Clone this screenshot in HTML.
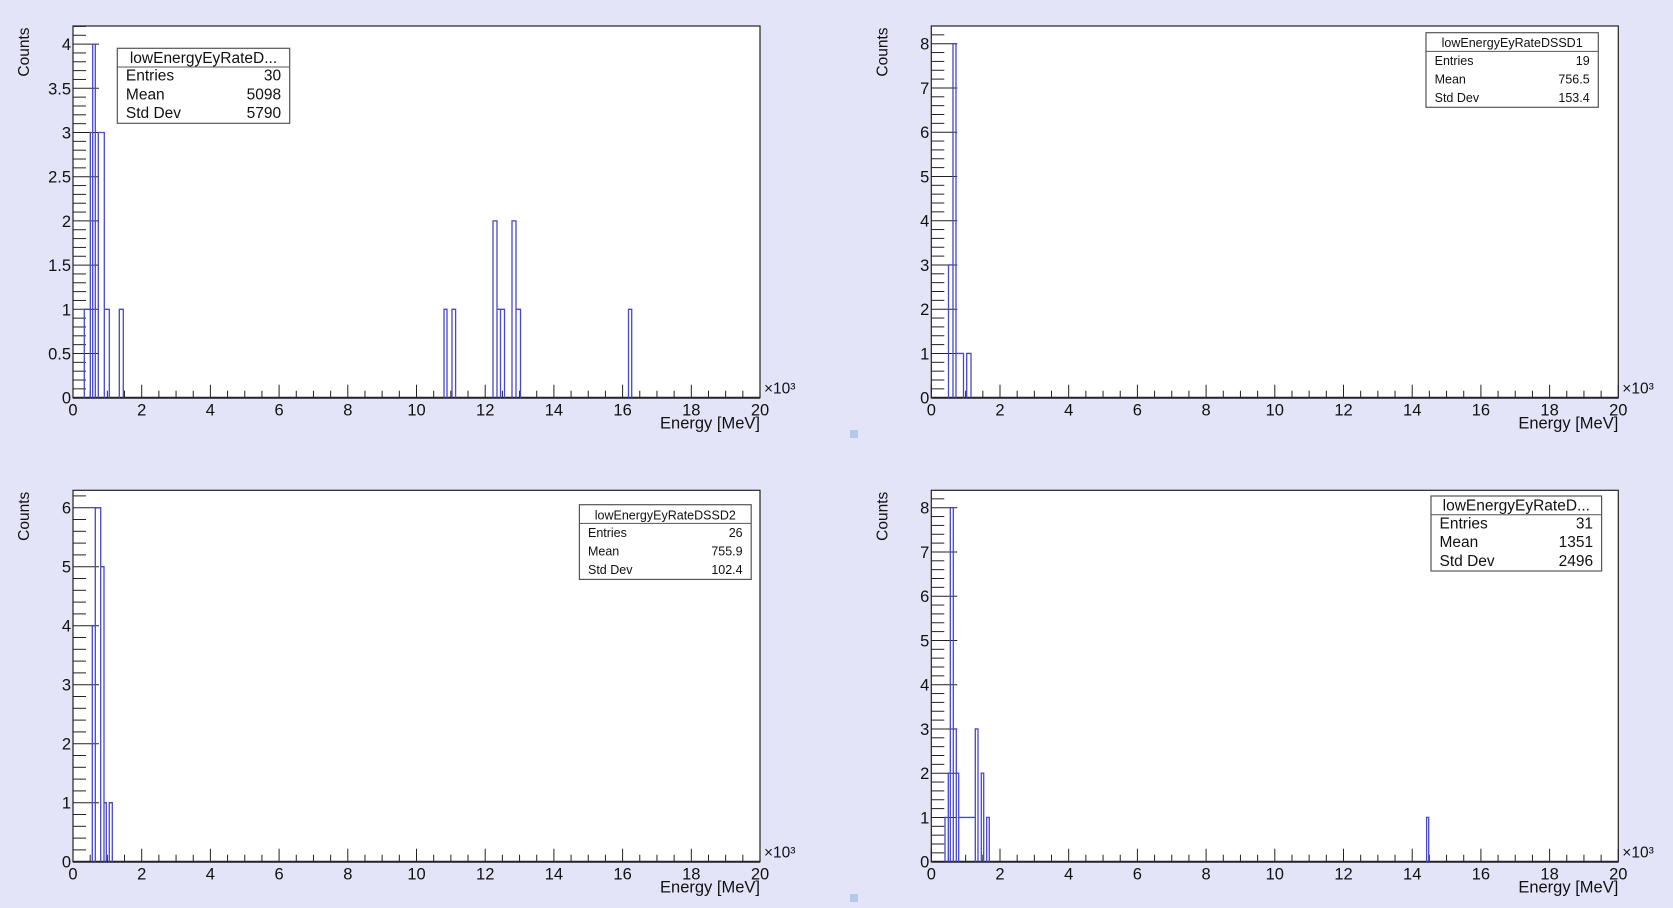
<!DOCTYPE html>
<html><head><meta charset="utf-8"><style>
html,body{margin:0;padding:0;background:#e3e4f8;}
svg{display:block;font-family:"Liberation Sans",sans-serif;}
</style></head><body>
<svg id="s" width="1673" height="908" xmlns="http://www.w3.org/2000/svg"></svg>
<script>
const s=document.getElementById('s');
let h='<rect width="1673" height="908" fill="#e3e4f8"/>';
const W=687, PX=34.35;
function panel(x0,yTop,yZero,ymax,unit,major,minor,labDec,hist,stat){
  h+=`<rect x="${x0}" y="${yTop}" width="${W}" height="${yZero-yTop}" fill="#fff" stroke="#222" stroke-width="1.2"/>`;
  for(let v=0;v<=ymax+1e-9;v+=minor){
    const y=yZero-v*unit; if(y<yTop) break;
    const isMaj=Math.abs(v/major-Math.round(v/major))<1e-6;
    h+=`<line x1="${x0}" x2="${x0+(isMaj?26:13)}" y1="${y}" y2="${y}" stroke="#222" stroke-width="1"/>`;
    if(isMaj){const t=labDec?(+v.toFixed(1)).toString():Math.round(v).toString();
      h+=`<text x="${x0-2}" y="${y+6}" font-size="16.5" text-anchor="end" fill="#111">${t}</text>`;}
  }
  for(let i=0;i<=40;i++){const x=x0+i*0.5*PX;const maj=i%4==0;
    h+=`<line x1="${x}" x2="${x}" y1="${yZero}" y2="${yZero-(maj?13:7)}" stroke="#222" stroke-width="1"/>`;
    if(maj) h+=`<text x="${x}" y="${yZero+18}" font-size="16.5" text-anchor="middle" fill="#111">${i/2}</text>`;}
  h+=`<line x1="${x0}" x2="${x0+W}" y1="${yZero}" y2="${yZero}" stroke="#222" stroke-width="2"/>`;
  h+=`<text x="${x0+W+4}" y="${yZero-4}" font-size="15.5" fill="#111">×10³</text>`;
  h+=`<text x="${x0+W}" y="${yZero+31}" font-size="16.5" text-anchor="end" fill="#111">Energy [MeV]</text>`;
  h+=`<text transform="translate(${x0-44},${yTop+26}) rotate(-90)" font-size="15.5" text-anchor="middle" fill="#111">Counts</text>`;
  let d='';
  for(const [a,b,v] of hist){const y=yZero-v*unit;d+=`M${a},${yZero}V${y}H${b}V${yZero}`;}
  h+=`<path d="${d}" fill="none" stroke="#4848c8" stroke-width="1.3"/>`;
  const [bx,by,bw,bh,fs,title,rows]=stat;
  const th=bh*0.25;
  h+=`<rect x="${bx}" y="${by}" width="${bw}" height="${bh}" fill="#fff" stroke="#555" stroke-width="1.2"/>`;
  h+=`<line x1="${bx}" x2="${bx+bw}" y1="${by+th}" y2="${by+th}" stroke="#555" stroke-width="1"/>`;
  h+=`<text x="${bx+bw/2}" y="${by+th*0.78}" font-size="${fs}" text-anchor="middle" fill="#111">${title}</text>`;
  const rh=(bh-th)/3;
  rows.forEach((r,i)=>{const y=by+th+rh*(i+0.72);
    h+=`<text x="${bx+bw*0.05}" y="${y}" font-size="${fs}" fill="#111">${r[0]}</text>`;
    h+=`<text x="${bx+bw*0.95}" y="${y}" font-size="${fs}" text-anchor="end" fill="#111">${r[1]}</text>`;});
}
panel(73,26,397.7,4.2,88.4,0.5,0.1,true,
 [[84.3,90.3,1],[90.3,92.7,3],[92.7,95.3,4],[95.3,98.3,2],[98.3,104.3,3],[104.3,109.3,1],[119.3,123.3,1],
  [444,447,1],[452,455.6,1],[493,497,2],[497,500.5,1],[500.5,504.5,1],[512,516,2],[516,520.5,1],[628.5,631.7,1]],
 [117.3,48.3,172.4,75,15.5,"lowEnergyEyRateD...",[["Entries","30"],["Mean","5098"],["Std Dev","5790"]]]);
panel(931.3,26,397.7,8.4,44.25,1,0.2,false,
 [[948.5,953,3],[953,956,8],[956,963.5,1],[966.7,971,1]],
 [1426,32.7,172.3,74.6,12.5,"lowEnergyEyRateDSSD1",[["Entries","19"],["Mean","756.5"],["Std Dev","153.4"]]]);
panel(73,490.3,861.7,6.3,59,1,0.2,false,
 [[92.3,95.3,4],[95.3,100.7,6],[100.7,104,5],[104,106.3,1],[109.3,112.3,1]],
 [579.4,504.7,171.8,74.7,12.5,"lowEnergyEyRateDSSD2",[["Entries","26"],["Mean","755.9"],["Std Dev","102.4"]]]);
panel(931.3,490.3,861.7,8.4,44.25,1,0.2,false,
 [[945,948.3,1],[948.3,950.3,2],[950.3,953.3,8],[953.3,956.3,3],[956.3,958.7,2],[958.7,975.3,1],[975.3,978,3],[981.3,983.7,2],[986.7,989.3,1],[1426.6,1428.7,1]],
 [1431,496,170.6,75,15.5,"lowEnergyEyRateD...",[["Entries","31"],["Mean","1351"],["Std Dev","2496"]]]);
h+='<rect x="850" y="430" width="8" height="8" fill="#b4c8e8"/><rect x="850" y="894" width="8" height="8" fill="#b4c8e8"/>';
s.innerHTML=h;
</script>
</body></html>
